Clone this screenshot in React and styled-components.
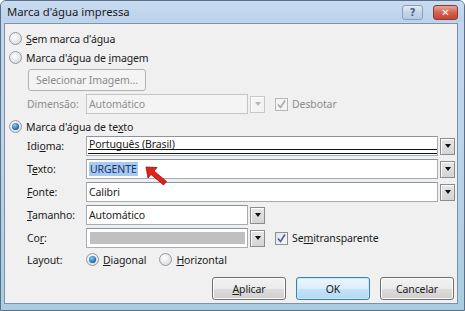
import React from "react";
import styled, { createGlobalStyle, css } from "styled-components";

const Global = createGlobalStyle`
  html, body { margin: 0; padding: 0; background: #fff; }
  body { font-family: "Noto Sans", "Open Sans", sans-serif; font-size: 10.5px; letter-spacing: -0.1px; color: #1b1b1b; }
  * { box-sizing: border-box; }
`;

const Window = styled.div`
  width: 465px;
  height: 311px;
  display: flex;
  flex-direction: column;
  background: linear-gradient(to bottom, #c3d7ed 0%, #bfd5eb 40%, #a9cde0 100%);
  border: 1px solid #5a6f88;
  border-radius: 6px 6px 0 0;
  overflow: hidden;
`;

const TitleBar = styled.div`
  height: 21px;
  flex: none;
  display: flex;
  align-items: center;
  justify-content: space-between;
  padding: 0 6px 0 6px;
  background: linear-gradient(to bottom, #c8dbf0 0%, #bcd2ea 100%);
`;

const Title = styled.span`
  font-size: 11.3px;
  letter-spacing: 0;
  color: #1a1a1a;
`;

const Captions = styled.div`
  display: flex;
  gap: 10px;
  margin-top: 2px;
`;

const CaptionButton = styled.div`
  height: 15px;
  display: flex;
  align-items: center;
  justify-content: center;
  border-radius: 3px;
  font-family: "DejaVu Sans", sans-serif;
  font-weight: bold;
  ${(p) =>
    p.$close
      ? css`
          width: 25px;
          background: linear-gradient(to bottom, #e6a898 0%, #d4624f 50%, #c54436 100%);
          border: 1px solid #8d3a33;
          color: #fff;
          font-size: 10px;
        `
      : css`
          width: 21px;
          background: linear-gradient(to bottom, #e3edf7 0%, #c3d5ea 50%, #b5cbe3 100%);
          border: 1px solid #8c9fb7;
          color: #4d6079;
          font-size: 10px;
        `}
`;

const Client = styled.div`
  position: relative;
  flex: 1;
  margin: 1px 6px 6px 3px;
  background: #f0f0f0;
  border: 1px solid #7d91ab;
  display: flex;
  flex-direction: column;
  padding: 5px 2px 0 0;
`;

const Row = styled.div`
  display: flex;
  align-items: center;
  height: ${(p) => p.$h || 20}px;
  margin-top: ${(p) => p.$mt || 0}px;
  padding-left: ${(p) => p.$pl || 0}px;
`;

const Label = styled.span`
  width: 59px;
  flex: none;
  color: ${(p) => (p.$disabled ? "#8d8d8d" : "#1b1b1b")};
`;

const U = styled.span`
  text-decoration: underline;
`;

const RadioWrap = styled.label`
  display: flex;
  align-items: center;
  gap: 4px;
  margin-left: ${(p) => p.$ml || 0}px;
`;

const RadioCircle = styled.span`
  width: 13px;
  height: 13px;
  border-radius: 50%;
  border: 1px solid #929aa4;
  background: radial-gradient(circle at 40% 35%, #ffffff 0%, #e6e6e6 55%, #cfd3d8 100%);
  display: flex;
  align-items: center;
  justify-content: center;
  flex: none;
  &::after {
    content: "";
    display: ${(p) => (p.$checked ? "block" : "none")};
    width: 7px;
    height: 7px;
    border-radius: 50%;
    background: radial-gradient(circle at 40% 35%, #8fd0f6 0%, #2a77c0 55%, #0c3f7f 100%);
  }
`;

const Radio = ({ checked, children, ml }) => (
  <RadioWrap $ml={ml}>
    <RadioCircle $checked={checked} />
    <span>{children}</span>
  </RadioWrap>
);

const PushButton = styled.div`
  width: ${(p) => p.$w}px;
  height: ${(p) => p.$h || 23}px;
  display: flex;
  align-items: center;
  justify-content: center;
  border-radius: 3px;
  ${(p) =>
    p.$disabled
      ? css`
          border: 1px solid #adb2b5;
          background: #f4f4f4;
          color: #8b8b8b;
        `
      : p.$default
      ? css`
          border: 1px solid #3c7fb1;
          background: linear-gradient(to bottom, #ecf6fd 0%, #dcedfa 50%, #c4e3f8 51%, #b3d9f4 100%);
          box-shadow: inset 0 0 0 1px #c5e8fb;
          color: #1b1b1b;
        `
      : css`
          border: 1px solid #707070;
          background: linear-gradient(to bottom, #f2f2f2 0%, #ebebeb 50%, #dddddd 51%, #cfcfcf 100%);
          box-shadow: inset 0 0 0 1px #fbfbfb;
          color: #1b1b1b;
        `}
`;

const Combo = styled.div`
  display: flex;
  align-items: center;
  height: 20px;
  width: ${(p) => (p.$w ? `${p.$w}px` : "auto")};
  flex: ${(p) => (p.$w ? "none" : "1")};
  gap: 2px;
`;

const Field = styled.div`
  position: relative;
  flex: 1;
  height: 20px;
  display: flex;
  align-items: center;
  padding: 0 2px ${(p) => (p.$underline ? 4 : 1)}px 2px;
  border: 1px solid ${(p) => (p.$disabled ? "#c4c4c4" : "#a5acb5")};
  border-top-color: ${(p) => (p.$disabled ? "#c4c4c4" : "#8e949c")};
  background: ${(p) => (p.$disabled ? "#f4f4f4" : "#fff")};
  color: ${(p) => (p.$disabled ? "#8f8f8f" : "#1b1b1b")};
  ${(p) =>
    p.$underline &&
    css`
      &::after {
        content: "";
        position: absolute;
        left: 1px;
        right: 0;
        bottom: 1px;
        height: 3px;
        border-top: 1px solid #111;
        border-bottom: 1px solid #111;
      }
    `}
`;

const Swatch = styled.div`
  flex: 1;
  height: 12px;
  background: #c0c0c0;
  margin: 1px 0 0 1px;
`;

const DropButton = styled.div`
  width: 15px;
  height: 17px;
  flex: none;
  display: flex;
  align-items: center;
  justify-content: center;
  border: 1px solid ${(p) => (p.$disabled ? "#c9c9c9" : "#8c8c8c")};
  background: ${(p) =>
    p.$disabled ? "#f4f4f4" : "linear-gradient(to bottom, #e6e6e6 0%, #d4d4d4 100%)"};
  box-shadow: inset 1px 1px 0 #fff;
  &::after {
    content: "";
    width: 0;
    height: 0;
    border-left: 3.5px solid transparent;
    border-right: 3.5px solid transparent;
    border-top: 4px solid ${(p) => (p.$disabled ? "#b8b8b8" : "#111")};
  }
`;

const ComboBox = ({ w, disabled, underline, swatch, children }) => (
  <Combo $w={w}>
    <Field $disabled={disabled} $underline={underline}>
      {swatch ? <Swatch /> : children}
    </Field>
    <DropButton $disabled={disabled} />
  </Combo>
);

const CheckWrap = styled.label`
  display: flex;
  align-items: center;
  gap: 4px;
  margin-left: ${(p) => p.$ml || 0}px;
  color: ${(p) => (p.$disabled ? "#8d8d8d" : "#1b1b1b")};
`;

const CheckBox = styled.span`
  width: 13px;
  height: 13px;
  flex: none;
  border: 1px solid ${(p) => (p.$disabled ? "#b5b5b5" : "#8f8f8f")};
  background: ${(p) =>
    p.$disabled ? "#f4f4f4" : "linear-gradient(135deg, #dfe3ea 0%, #f6f7f9 100%)"};
  display: flex;
  align-items: center;
  justify-content: center;
`;

const Check = ({ disabled, children, ml }) => (
  <CheckWrap $ml={ml} $disabled={disabled}>
    <CheckBox $disabled={disabled}>
      <svg width="9" height="9" viewBox="0 0 9 9">
        <path
          d="M1 4.5 L3.5 7.5 L8 0.5"
          fill="none"
          stroke={disabled ? "#a9a9a9" : "#4b5f96"}
          strokeWidth="1.6"
        />
      </svg>
    </CheckBox>
    <span>{children}</span>
  </CheckWrap>
);

const Selected = styled.span`
  background: #a6cbef;
  color: #1f2f6b;
  padding: 0 1px;
`;

const Footer = styled.div`
  display: flex;
  justify-content: flex-end;
  gap: 10px;
  margin-top: 8px;
  padding-right: 1px;
`;

const Annotation = styled.svg`
  position: absolute;
  left: 139px;
  top: 140px;
  pointer-events: none;
`;

export default function App() {
  return (
    <>
      <Global />
      <Window>
        <TitleBar>
          <Title>Marca d'água impressa</Title>
          <Captions>
            <CaptionButton>?</CaptionButton>
            <CaptionButton $close>✕</CaptionButton>
          </Captions>
        </TitleBar>
        <Client>
          <Row $h={19} $pl={4}>
            <Radio>
              <U>S</U>em marca d'água
            </Radio>
          </Row>
          <Row $h={19} $pl={4}>
            <Radio>
              Marca d'água de <U>i</U>magem
            </Radio>
          </Row>
          <Row $h={22} $mt={2} $pl={23}>
            <PushButton $w={118} $h={22} $disabled>
              Selecionar Imagem...
            </PushButton>
          </Row>
          <Row $mt={3} $pl={22}>
            <Label $disabled>Dimensão:</Label>
            <ComboBox w={179} disabled>
              Automático
            </ComboBox>
            <Check disabled ml={10}>
              Desbotar
            </Check>
          </Row>
          <Row $h={19} $mt={3} $pl={4}>
            <Radio checked>
              Marca d'água de te<U>x</U>to
            </Radio>
          </Row>
          <Row $pl={22}>
            <Label>
              Idi<U>o</U>ma:
            </Label>
            <ComboBox underline>Português (Brasil)</ComboBox>
          </Row>
          <Row $mt={3} $pl={22}>
            <Label>
              T<U>e</U>xto:
            </Label>
            <ComboBox>
              <Selected>URGENTE</Selected>
            </ComboBox>
          </Row>
          <Row $mt={3} $pl={22}>
            <Label>
              <U>F</U>onte:
            </Label>
            <ComboBox>Calibri</ComboBox>
          </Row>
          <Row $mt={3} $pl={22}>
            <Label>
              <U>T</U>amanho:
            </Label>
            <ComboBox w={179}>Automático</ComboBox>
          </Row>
          <Row $mt={3} $pl={22}>
            <Label>
              Co<U>r</U>:
            </Label>
            <ComboBox w={179} swatch />
            <Check ml={10}>
              Se<U>m</U>itransparente
            </Check>
          </Row>
          <Row $h={19} $mt={2} $pl={22}>
            <Label>Layout:</Label>
            <Radio checked>
              <U>D</U>iagonal
            </Radio>
            <Radio ml={13}>
              <U>H</U>orizontal
            </Radio>
          </Row>
          <Footer>
            <PushButton $w={74}>
              <span>
                <U>A</U>plicar
              </span>
            </PushButton>
            <PushButton $w={74} $default>
              OK
            </PushButton>
            <PushButton $w={74}>Cancelar</PushButton>
          </Footer>
          <Annotation width="28" height="24" viewBox="0 0 28 24">
            <path
              d="M2 3 L13 3.5 L10 7 L22.5 17.5 L19.5 21 L7 10.5 L4 14 Z"
              fill="#e3231b"
              stroke="#8a1410"
              strokeWidth="0.8"
              strokeLinejoin="round"
            />
          </Annotation>
        </Client>
      </Window>
    </>
  );
}
